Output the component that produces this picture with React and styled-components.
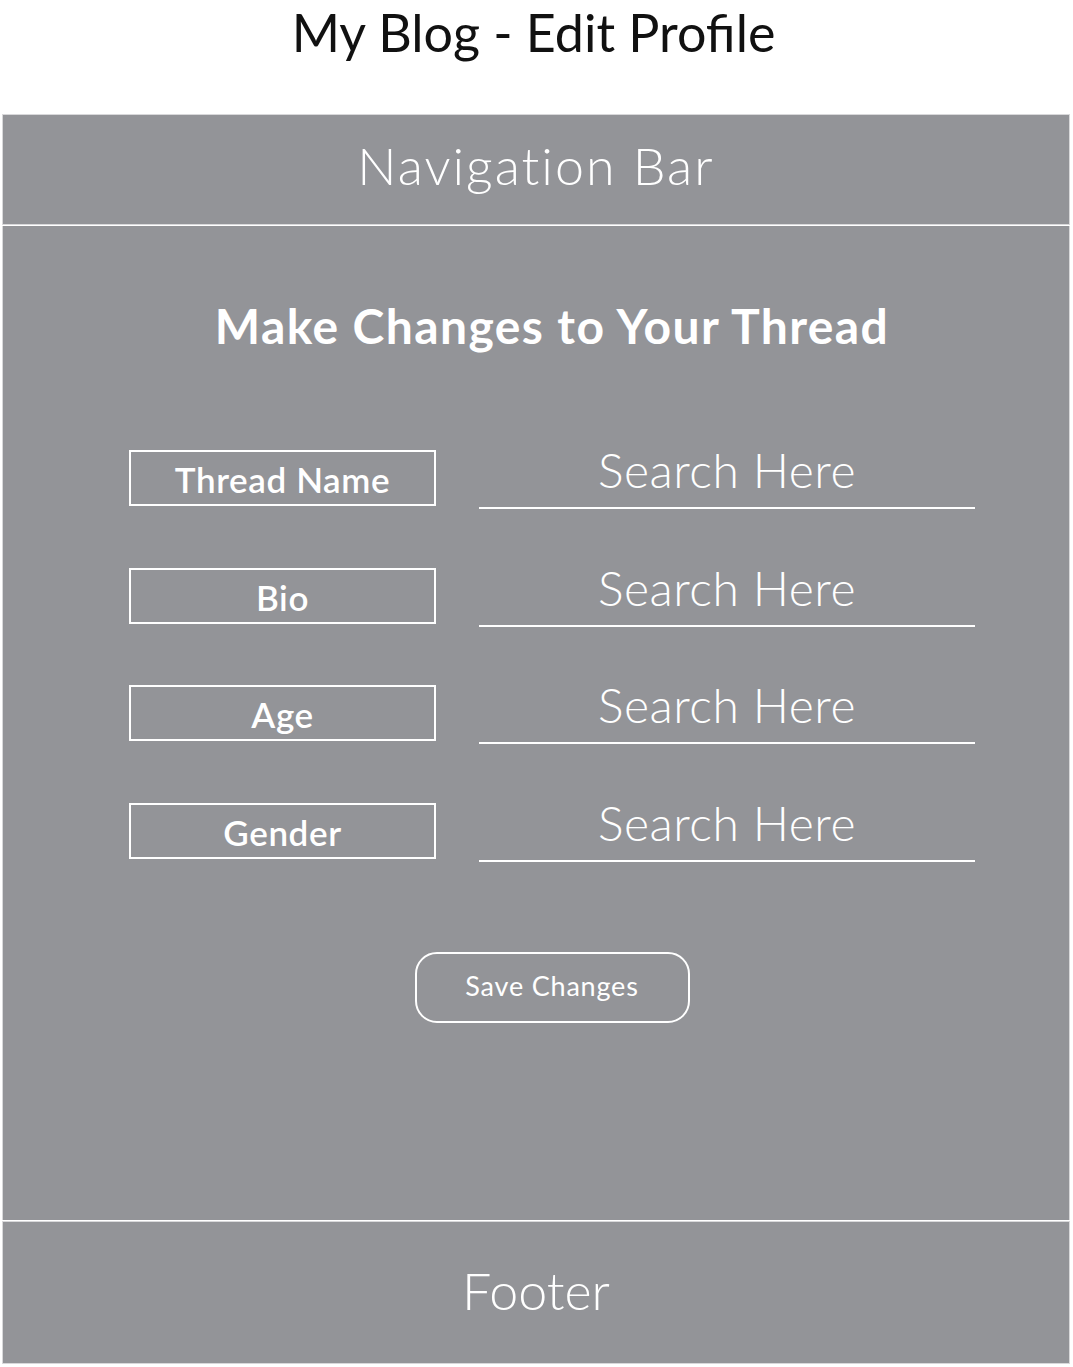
import React from 'react';
import styled, { createGlobalStyle } from 'styled-components';

const GlobalStyle = createGlobalStyle`
  body {
    margin: 0;
    background: #fff;
    font-family: 'Lato', 'Open Sans', sans-serif;
  }
`;

const Page = styled.div`
  display: flex;
  flex-direction: column;
  width: 1073px;
  height: 1367px;
`;

const Title = styled.h1`
  margin: 0;
  height: 114px;
  display: flex;
  justify-content: center;
  padding-top: 2px;
  padding-right: 6px;
  box-sizing: border-box;
  font-size: 52px;
  font-weight: 400;
  line-height: 60px;
  color: #111;
`;

const Band = styled.div`
  margin: 0 3px 0 2px;
  background: #939498;
  border: 1px solid #d8d8da;
  color: #fff;
  display: flex;
  align-items: center;
  justify-content: center;
  box-sizing: border-box;
  height: ${({ h }) => h}px;
  font-size: 52px;
  font-weight: 300;
  letter-spacing: ${({ ls }) => ls || 0}px;
  padding-bottom: ${({ pb }) => pb || 0}px;
`;

const Main = styled.main`
  margin: 1px 3px 1px 2px;
  background: #939498;
  height: 994px;
  box-sizing: border-box;
  border-left: 1px solid #d8d8da;
  border-right: 1px solid #d8d8da;
  color: #fff;
  display: flex;
  flex-direction: column;
  align-items: center;
`;

const Heading = styled.h2`
  margin: 70px 0 0 32px;
  font-size: 48px;
  font-weight: 700;
  letter-spacing: 1.4px;
  line-height: 60px;
`;

const Form = styled.div`
  margin-top: 94px;
  display: flex;
  flex-direction: column;
  gap: 58.5px;
  align-self: flex-start;
  margin-left: 126px;
`;

const Row = styled.div`
  display: flex;
  align-items: flex-start;
`;

const Label = styled.div`
  width: 307px;
  height: 56px;
  box-sizing: border-box;
  border: 2px solid #fff;
  display: flex;
  align-items: center;
  justify-content: center;
  font-size: 35px;
  font-weight: 600;
  letter-spacing: 0.6px;
  padding-top: 2px;
`;

const Field = styled.div`
  margin-left: 43px;
  width: 496px;
  height: 59px;
  box-sizing: border-box;
  border-bottom: 2px solid #fff;
  display: flex;
  justify-content: center;
  align-items: flex-end;
  padding-bottom: 13px;
  font-size: 48px;
  font-weight: 300;
  line-height: 1;
  letter-spacing: 0.5px;
`;

const SaveButton = styled.button`
  margin-top: 90px;
  margin-left: 32px;
  width: 275px;
  height: 71px;
  border: 2px solid #fff;
  border-radius: 22px;
  background: transparent;
  color: #fff;
  font-family: inherit;
  font-size: 27px;
  font-weight: 400;
  letter-spacing: 0.8px;
  padding-bottom: 4px;
`;

const fields = ['Thread Name', 'Bio', 'Age', 'Gender'];

const App = () => (
  <Page>
    <GlobalStyle />
    <Title>My Blog - Edit Profile</Title>
    <Band h={111} pb={9} ls={2}>Navigation Bar</Band>
    <Main>
      <Heading>Make Changes to Your Thread</Heading>
      <Form>
        {fields.map(f => (
          <Row key={f}>
            <Label>{f}</Label>
            <Field>Search Here</Field>
          </Row>
        ))}
      </Form>
      <SaveButton>Save Changes</SaveButton>
    </Main>
    <Band h={143} pb={6}>Footer</Band>
  </Page>
);

export default App;
